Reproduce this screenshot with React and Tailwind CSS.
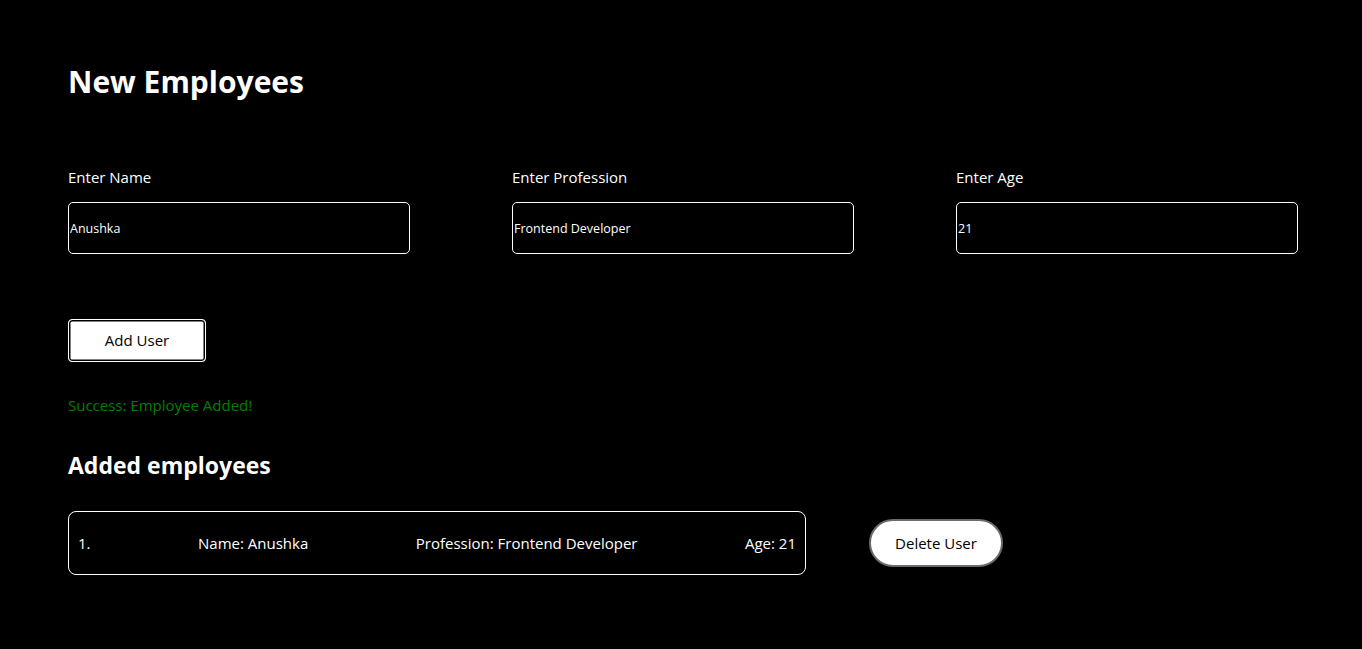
import React, { useState } from 'react';

const FIELDS = [
  { key: 'name', label: 'Enter Name' },
  { key: 'profession', label: 'Enter Profession' },
  { key: 'age', label: 'Enter Age' },
];

const App = () => {
  const [form, setForm] = useState({ name: 'Anushka', profession: 'Frontend Developer', age: '21' });
  const [employees, setEmployees] = useState([
    { name: 'Anushka', profession: 'Frontend Developer', age: '21' },
  ]);
  const [message, setMessage] = useState('Success: Employee Added!');

  const handleAdd = () => {
    if (!form.name || !form.profession || !form.age) {
      setMessage('');
      return;
    }
    setEmployees(prev => [...prev, { ...form }]);
    setMessage('Success: Employee Added!');
  };

  const handleDelete = (idx) => {
    setEmployees(prev => prev.filter((_, i) => i !== idx));
  };

  return (
    <div className="min-h-[649px] bg-black text-white font-['Open_Sans',sans-serif] pl-[68px] pt-[62px] pb-10">
      <h1 className="text-[30px] font-bold leading-[40px]">New Employees</h1>

      {/* Inputs */}
      <div className="flex justify-between w-[1230px] mt-[64px]">
        {FIELDS.map((f) => (
          <div key={f.key} className="flex flex-col w-[342px]">
            <label className="text-[15px] leading-[22px]">{f.label}</label>
            <input
              className="mt-[14px] h-[52px] w-[342px] bg-black text-white text-[12.5px] border border-white rounded-[5px] px-[1px] outline-none"
              value={form[f.key]}
              onChange={(e) => setForm({ ...form, [f.key]: e.target.value })}
            />
          </div>
        ))}
      </div>

      <button
        className="mt-[65px] w-[138px] h-[43px] bg-white text-black text-[15px] border border-white rounded-[4px] shadow-[inset_0_0_0_1.5px_black]"
        onClick={handleAdd}
      >
        Add User
      </button>

      <p className="mt-[32px] text-[15px] leading-[22px] text-[#008000]">{message}</p>

      <h2 className="mt-[34px] text-[23px] font-bold leading-[30px]">Added employees</h2>

      <div className="mt-[31px] flex flex-col gap-4">
        {employees.map((emp, i) => (
          <div key={i} className="flex items-center">
            <div className="w-[738px] h-[64px] border border-white rounded-[8px] px-[9px] flex items-center justify-between text-[15px]">
              <span>{i + 1}.</span>
              <span>Name: {emp.name}</span>
              <span>Profession: {emp.profession}</span>
              <span>Age: {emp.age}</span>
            </div>
            <button
              className="ml-[63px] w-[134px] h-[48px] bg-white text-black text-[15px] rounded-full border-2 border-[#6b6b6b]"
              onClick={() => handleDelete(i)}
            >
              Delete User
            </button>
          </div>
        ))}
      </div>
    </div>
  );
};

export default App;
